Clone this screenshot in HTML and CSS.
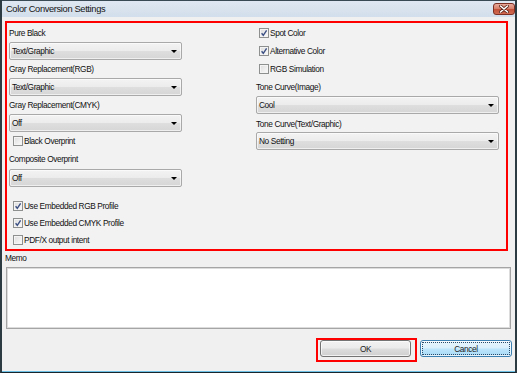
FILE: index.html
```html
<!DOCTYPE html>
<html>
<head>
<meta charset="utf-8">
<link rel="stylesheet" href="styles.css">
</head>
<body>
<div class="window">
  <div class="titlebar">
    <span class="title">Color Conversion Settings</span>
    <span class="close">
      <svg width="10" height="8" viewBox="0 0 10 8"><path d="M1.5 1 L8.5 7 M8.5 1 L1.5 7" stroke="#5a2218" stroke-width="3" stroke-linecap="round"/><path d="M1.5 1 L8.5 7 M8.5 1 L1.5 7" stroke="#ffffff" stroke-width="1.6" stroke-linecap="round"/></svg>
    </span>
  </div>
  <div class="content">
    <div class="group">
      <div class="col col-left">
        <div class="label">Pure Black</div>
        <div class="select"><span>Text/Graphic</span><i class="arrow"></i></div>
        <div class="label">Gray Replacement(RGB)</div>
        <div class="select"><span>Text/Graphic</span><i class="arrow"></i></div>
        <div class="label">Gray Replacement(CMYK)</div>
        <div class="select"><span>Off</span><i class="arrow"></i></div>
        <div class="check row18 indent-l"><span class="box"></span><span>Black Overprint</span></div>
        <div class="label tall">Composite Overprint</div>
        <div class="select"><span>Off</span><i class="arrow"></i></div>
        <div class="checks">
          <div class="check row17 indent-l"><span class="box on"><svg width="10" height="10" viewBox="0 0 10 10"><path d="M2.6 5.2 L4.3 7.3 L7.6 2.4" fill="none" stroke="#3d5084" stroke-width="1.4"/></svg></span><span>Use Embedded RGB Profile</span></div>
          <div class="check row17 indent-l"><span class="box on"><svg width="10" height="10" viewBox="0 0 10 10"><path d="M2.6 5.2 L4.3 7.3 L7.6 2.4" fill="none" stroke="#3d5084" stroke-width="1.4"/></svg></span><span>Use Embedded CMYK Profile</span></div>
          <div class="check row17 indent-l"><span class="box"></span><span>PDF/X output intent</span></div>
        </div>
      </div>
      <div class="col col-right">
        <div class="check row18 indent-r"><span class="box on"><svg width="10" height="10" viewBox="0 0 10 10"><path d="M2.6 5.2 L4.3 7.3 L7.6 2.4" fill="none" stroke="#3d5084" stroke-width="1.4"/></svg></span><span>Spot Color</span></div>
        <div class="check row18 indent-r"><span class="box on"><svg width="10" height="10" viewBox="0 0 10 10"><path d="M2.6 5.2 L4.3 7.3 L7.6 2.4" fill="none" stroke="#3d5084" stroke-width="1.4"/></svg></span><span>Alternative Color</span></div>
        <div class="check row18 indent-r"><span class="box"></span><span>RGB Simulation</span></div>
        <div class="label">Tone Curve(Image)</div>
        <div class="select"><span>Cool</span><i class="arrow"></i></div>
        <div class="label low">Tone Curve(Text/Graphic)</div>
        <div class="select"><span>No Setting</span><i class="arrow"></i></div>
      </div>
    </div>
    <div class="memo-label">Memo</div>
    <div class="memo"></div>
    <div class="buttons">
      <div class="highlight"><div class="btn">OK</div></div>
      <div class="btn btn-default"><span class="focus">Cancel</span></div>
    </div>
  </div>
</div>
</body>
</html>
```
FILE: styles.css
```css
* { box-sizing: border-box; }
html, body { margin: 0; padding: 0; }
body {
  width: 517px;
  height: 373px;
  overflow: hidden;
  font-family: "Liberation Sans", Arial, sans-serif;
  font-size: 8.3px;
  letter-spacing: -0.38px;
  color: #111111;
  background: #f0f0f0;
}
.window {
  width: 517px;
  height: 373px;
  display: flex;
  flex-direction: column;
  border-left: 2px solid #2c3a42;
  border-right: 2px solid #2c3a42;
  border-bottom: 1px solid #17262d;
  background: #f0f0f0;
}
.titlebar {
  height: 17px;
  flex: none;
  display: flex;
  align-items: flex-start;
  justify-content: space-between;
  padding-left: 4px;
  padding-right: 0;
  background: linear-gradient(#dfe8f2, #d2deeb);
  border-top: 1px solid #3a4a55;
}
.title {
  font-size: 9.3px;
  letter-spacing: -0.35px;
  line-height: 16px;
  color: #141414;
}
.close {
  margin-top: 2px;
  width: 22px;
  height: 12px;
  border: 1px solid #7c2f22;
  border-radius: 3px;
  background: linear-gradient(#e9a99a 0%, #d8806c 45%, #c4523b 55%, #cf6a50 100%);
  display: flex;
  align-items: center;
  justify-content: center;
}
.content {
  flex: 1;
  display: flex;
  flex-direction: column;
  padding: 4px 3px 0 3px;
  box-shadow: inset 0 -1px 0 #6cc0e6;
}
.group {
  height: 230px;
  flex: none;
  margin-right: 4px;
  border: 2px solid #ff0000;
  display: flex;
  background: #f2f2f2;
}
.col {
  display: flex;
  flex-direction: column;
  padding-top: 1px;
}
.col-left { width: 249px; padding-left: 2px; }
.col-left .select { width: 173px; }
.col-right { flex: 1; padding-right: 7px; }
.label {
  height: 18px;
  line-height: 18px;
  white-space: nowrap;
}
.label.tall { height: 19px; line-height: 19px; }
.label.low { line-height: 21px; }
.select {
  height: 18px;
  flex: none;
  border: 1px solid #a9a9a9;
  border-radius: 2px;
  background: linear-gradient(#f3f3f3 0%, #ececec 48%, #dedede 52%, #d6d6d6 100%);
  display: flex;
  align-items: center;
  justify-content: space-between;
  padding: 0 4px 0 2px;
  box-shadow: inset 0 0 0 1px rgba(255,255,255,0.6);
}
.arrow {
  width: 0;
  height: 0;
  border-left: 3px solid transparent;
  border-right: 3px solid transparent;
  border-top: 3px solid #000;
}
.check {
  display: flex;
  align-items: center;
  gap: 1px;
  white-space: nowrap;
}
.row18 { height: 18px; }
.row17 { height: 17px; }
.indent-l { padding-left: 4px; }
.indent-r { padding-left: 3px; }
.checks { margin-top: 10px; display: flex; flex-direction: column; }
.box {
  width: 10px;
  height: 10px;
  flex: none;
  border: 1px solid #8e8f8f;
  background: linear-gradient(135deg, #dcdcdc, #fbfbfb);
  box-shadow: inset 0 0 0 1px #f4f4f4;
  position: relative;
}
.box svg { position: absolute; left: -1px; top: -1px; }
.memo-label {
  height: 14px;
  line-height: 14px;
  padding-left: 0;
}
.memo {
  height: 62px;
  margin: 2px 1px 0 1px;
  background: #ffffff;
  border: 1px solid #a5a5a5;
  box-shadow: inset 0 0 0 1px #dcdcdc;
}
.buttons {
  margin-top: 9px;
  display: flex;
  justify-content: flex-end;
  align-items: flex-start;
  gap: 3px;
}
.highlight {
  border: 2px solid #ff0000;
  padding: 0 4px 3px 2px;
}
.btn {
  width: 91px;
  height: 17px;
  border: 1px solid #737373;
  border-radius: 3px;
  background: linear-gradient(#f2f2f2 0%, #ebebeb 48%, #dddddd 52%, #cfcfcf 100%);
  display: flex;
  align-items: center;
  justify-content: center;
  box-shadow: inset 0 0 0 1px rgba(255,255,255,0.7);
  color: #1e1e1e;
}
.btn-default {
  width: 92px;
  margin-top: 2px;
  border-color: #3c7fb1;
  background: linear-gradient(#eaf6fd 0%, #d9f0fc 48%, #bee6fd 52%, #a7d9f5 100%);
  padding: 1px;
}
.focus {
  flex: 1;
  align-self: stretch;
  display: flex;
  align-items: center;
  justify-content: center;
  border: 1px dotted #2a4a6a;
  border-radius: 1px;
}
```
